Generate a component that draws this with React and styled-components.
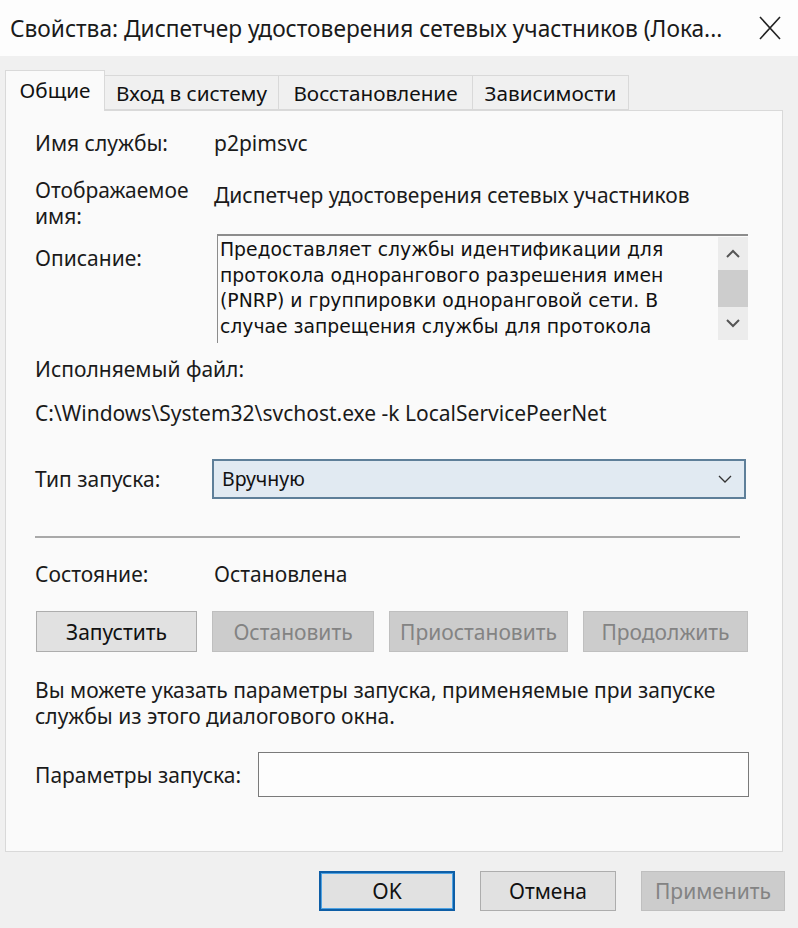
import React from 'react';
import styled, { createGlobalStyle } from 'styled-components';

const GlobalStyle = createGlobalStyle`
  html, body {
    margin: 0;
    padding: 0;
    background: #f0f0f0;
  }
  body {
    font-family: 'Noto Sans', 'Open Sans', sans-serif;
    color: #111;
  }
`

const Window = styled.div`
  width: 798px;
  height: 928px;
  display: flex;
  flex-direction: column;
  background: #f0f0f0;
  overflow: hidden;
`

const TitleBar = styled.div`
  height: 56px;
  flex: none;
  background: #fdfdfd;
  display: flex;
  align-items: center;
  justify-content: space-between;
  padding: 0 16px 0 10px;
`

const Title = styled.span`
  font-size: 22.7px;
  color: #1a1a1a;
  white-space: nowrap;
`

const CloseBtn = styled.div`
  width: 24px;
  height: 24px;
  display: flex;
  align-items: center;
  justify-content: center;
`

const Body = styled.div`
  flex: 1;
  display: flex;
  flex-direction: column;
  padding: 14px 15px 0 5px;
`

const TabStrip = styled.div`
  display: flex;
  align-items: flex-end;
  height: 40px;
  position: relative;
  z-index: 1;
`

const Tab = styled.div`
  box-sizing: border-box;
  width: ${p => p.w}px;
  height: ${p => (p.active ? 41 : 35)}px;
  margin-bottom: ${p => (p.active ? -1 : 0)}px;
  background: ${p => (p.active ? '#fafafa' : '#f0f0f0')};
  border: 1px solid #d9d9d9;
  border-bottom: ${p => (p.active ? 'none' : '1px solid #d9d9d9')};
  border-left: ${p => (p.active || p.first ? '1px solid #d9d9d9' : 'none')};
  font-size: 20.7px;
  line-height: 26px;
  text-align: center;
  padding-top: ${p => (p.active ? 6 : 4)}px;
  white-space: nowrap;
  color: #111;
`

const Panel = styled.div`
  box-sizing: border-box;
  width: 778px;
  height: 742px;
  background: #fafafa;
  border: 1px solid #d9d9d9;
  padding: 19px 0 0 29px;
  font-size: 21px;
  line-height: 26px;
`

const Row = styled.div`
  display: grid;
  grid-template-columns: ${p => p.label || 179}px 1fr;
  align-items: ${p => (p.center ? 'center' : 'start')};
  margin-top: ${p => p.top || 0}px;
`

const Label = styled.div`
  color: #1a1a1a;
  white-space: nowrap;
  padding-top: ${p => p.pt || 0}px;
`

const Value = styled.div`
  color: #1a1a1a;
  padding-top: ${p => p.pt || 0}px;
  white-space: nowrap;
`

const Line = styled.div`
  margin-top: ${p => p.top || 0}px;
  color: #1a1a1a;
  white-space: nowrap;
`

const DescBox = styled.div`
  box-sizing: border-box;
  width: 531px;
  height: 109px;
  margin-left: 3px;
  border-top: 2px solid #8c8c8c;
  border-left: 1px solid #8c8c8c;
  background: #fafafa;
  display: flex;
  justify-content: space-between;
`

const DescText = styled.div`
  font-family: 'DejaVu Sans', 'Noto Sans', sans-serif;
  font-size: 18.8px;
  line-height: 25.7px;
  padding: 1px 0 0 2px;
  color: #111;
  overflow: hidden;
  white-space: nowrap;
`

const Scroll = styled.div`
  width: 30px;
  flex: none;
  margin-top: 1px;
  height: 103px;
  display: flex;
  flex-direction: column;
  background: #ececec;
`

const ScrollBtn = styled.div`
  height: 33px;
  display: flex;
  align-items: center;
  justify-content: center;
`

const Thumb = styled.div`
  height: 37px;
  background: #cdcdcd;
`

const Combo = styled.div`
  box-sizing: border-box;
  width: 534px;
  height: 40px;
  margin-left: -2px;
  background: #e1eaf2;
  border: 2px solid #5e7f99;
  display: flex;
  align-items: center;
  justify-content: space-between;
  padding: 0 12px 0 8px;
  font-size: 19.5px;
  color: #111;
`

const Separator = styled.div`
  width: 705px;
  height: 2px;
  background: #a9a9a9;
  margin-top: ${p => p.top}px;
`

const ButtonRow = styled.div`
  display: flex;
  gap: ${p => p.gap}px;
  margin-top: ${p => p.top || 0}px;
  margin-left: ${p => p.left || 0}px;
`

const Button = styled.div`
  box-sizing: border-box;
  width: ${p => p.w}px;
  height: ${p => p.h || 41}px;
  display: flex;
  align-items: center;
  justify-content: center;
  font-size: 21px;
  white-space: nowrap;
  background: ${p => (p.disabled ? '#cccccc' : '#e1e1e1')};
  color: ${p => (p.disabled ? '#838383' : '#111')};
  border: ${p => (p.primary ? '2px solid #0e5ea6' : p.disabled ? '1px solid #bfbfbf' : '1px solid #adadad')};
  box-shadow: ${p => (p.primary ? 'inset 0 0 0 1px #4fa3e3' : 'none')};
`

const TextInput = styled.div`
  box-sizing: border-box;
  width: 491px;
  height: 45px;
  background: #fdfdfd;
  border: 1px solid #7a7a7a;
`

const Footer = styled.div`
  display: flex;
  justify-content: flex-end;
  padding: 19px 0 0 0;
  margin-right: -2px;
`

export default function App() {
  return (
    <Window>
      <GlobalStyle />
      <TitleBar>
        <Title>Свойства: Диспетчер удостоверения сетевых участников (Лока...</Title>
        <CloseBtn>
          <svg width="22" height="24" viewBox="0 0 22 24">
            <path d="M1 1 L21 23 M21 1 L1 23" stroke="#222" strokeWidth="1.6" fill="none" />
          </svg>
        </CloseBtn>
      </TitleBar>
      <Body>
        <TabStrip>
          <Tab active w={100}>Общие</Tab>
          <Tab w={174}>Вход в систему</Tab>
          <Tab w={194}>Восстановление</Tab>
          <Tab w={156}>Зависимости</Tab>
        </TabStrip>
        <Panel>
          <Row>
            <Label>Имя службы:</Label>
            <Value>p2pimsvc</Value>
          </Row>
          <Row top={21}>
            <Label>Отображаемое<br />имя:</Label>
            <Value pt={5}>Диспетчер удостоверения сетевых участников</Value>
          </Row>
          <Row top={5}>
            <Label pt={11}>Описание:</Label>
            <DescBox>
              <DescText>
                Предоставляет службы идентификации для<br />
                протокола однорангового разрешения имен<br />
                (PNRP) и группировки одноранговой сети. В<br />
                случае запрещения службы для протокола
              </DescText>
              <Scroll>
                <ScrollBtn>
                  <svg width="14" height="9" viewBox="0 0 14 9">
                    <path d="M1 8 L7 2 L13 8" stroke="#555" strokeWidth="2" fill="none" />
                  </svg>
                </ScrollBtn>
                <Thumb />
                <ScrollBtn>
                  <svg width="14" height="9" viewBox="0 0 14 9">
                    <path d="M1 1 L7 7 L13 1" stroke="#555" strokeWidth="2" fill="none" />
                  </svg>
                </ScrollBtn>
              </Scroll>
            </DescBox>
          </Row>
          <Line top={13}>Исполняемый файл:</Line>
          <Line top={18}>C:\Windows\System32\svchost.exe -k LocalServicePeerNet</Line>
          <Row top={33} center>
            <Label>Тип запуска:</Label>
            <Combo>
              <span>Вручную</span>
              <svg width="14" height="8" viewBox="0 0 14 8">
                <path d="M1 1 L7 7 L13 1" stroke="#333" strokeWidth="1.3" fill="none" />
              </svg>
            </Combo>
          </Row>
          <Separator top={37} />
          <Row top={23}>
            <Label>Состояние:</Label>
            <Value pt={0}>Остановлена</Value>
          </Row>
          <ButtonRow top={24} gap={15} left={1}>
            <Button w={161}>Запустить</Button>
            <Button w={162} disabled>Остановить</Button>
            <Button w={179} disabled>Приостановить</Button>
            <Button w={165} disabled>Продолжить</Button>
          </ButtonRow>
          <Line top={25}>
            Вы можете указать параметры запуска, применяемые при запуске<br />
            службы из этого диалогового окна.
          </Line>
          <Row top={23} center label={223}>
            <Label>Параметры запуска:</Label>
            <TextInput />
          </Row>
        </Panel>
        <Footer>
          <ButtonRow gap={25}>
            <Button w={136} h={40} primary>OK</Button>
            <Button w={136} h={40}>Отмена</Button>
            <Button w={144} h={40} disabled>Применить</Button>
          </ButtonRow>
        </Footer>
      </Body>
    </Window>
  );
}
